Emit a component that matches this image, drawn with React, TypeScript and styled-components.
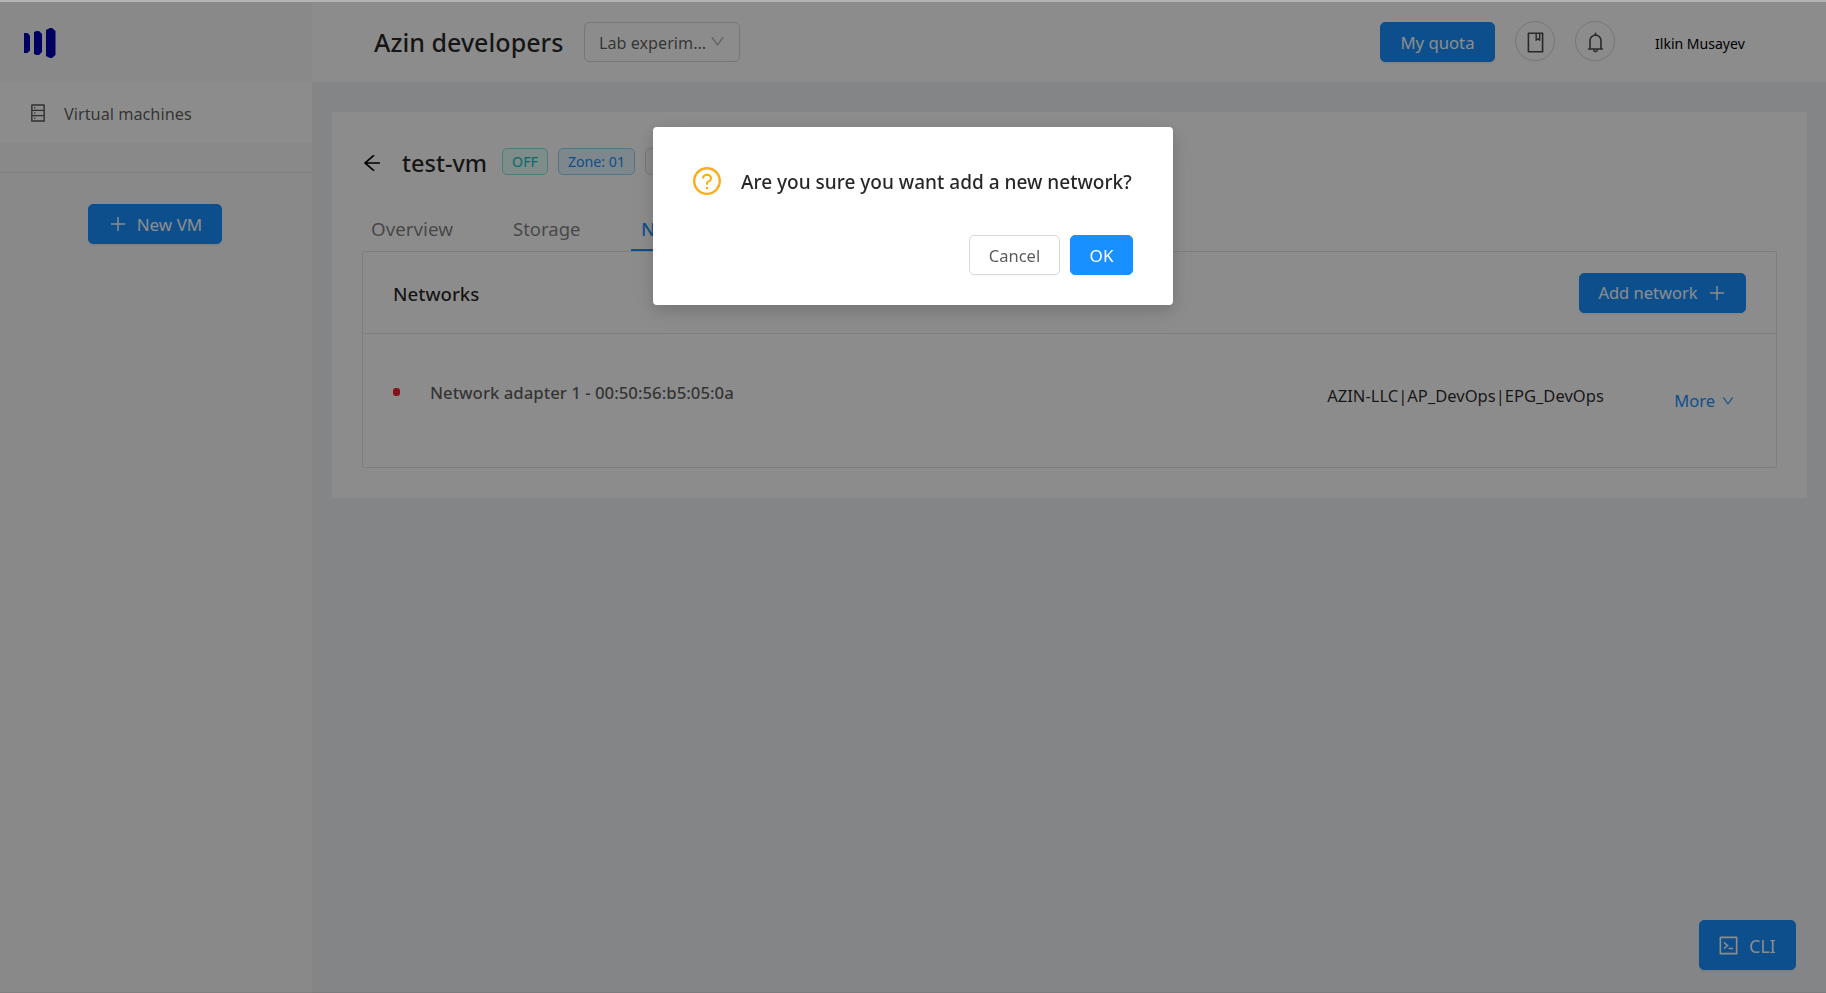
import React from "react";
import styled, { createGlobalStyle } from "styled-components";
import {
  AiOutlineArrowLeft,
  AiOutlineBell,
  AiOutlineBook,
  AiOutlineCode,
  AiOutlineDatabase,
  AiOutlineDown,
  AiOutlinePlus,
  AiOutlineQuestionCircle,
} from "react-icons/ai";

const GlobalStyle = createGlobalStyle`
  *, *::before, *::after { box-sizing: border-box; }
  body {
    margin: 0;
    overflow: hidden;
    font-family: "Noto Sans", "Open Sans", sans-serif;
    font-size: 16.5px;
    color: rgba(0, 0, 0, 0.85);
    background: #f0f2f5;
  }
  svg { display: block; flex: none; }
`;

const Page = styled.div`
  display: flex;
  height: 993px;
  padding-top: 2px;
`;

const Sidebar = styled.aside`
  width: 312px;
  flex: none;
  background: #fafafa;
  display: flex;
  flex-direction: column;
`;

const LogoArea = styled.div`
  height: 80px;
  padding: 26px 24px;
`;

const Menu = styled.nav`
  height: 91px;
  border-bottom: 1px solid #e4e4e4;
`;

const MenuItem = styled.a`
  display: flex;
  align-items: center;
  height: 61px;
  padding-left: 28px;
  gap: 16px;
  background: #fff;
  color: rgba(0, 0, 0, 0.65);
  font-size: 16.3px;
  line-height: 24px;
  span { padding-top: 2px; }
`;

const SidebarAction = styled.div`
  display: flex;
  padding: 31px 0 0 88px;
`;

const Button = styled.button<{ $width: number; $plain?: boolean; $size?: number }>`
  display: flex;
  align-items: center;
  justify-content: center;
  gap: 9px;
  width: ${(p) => p.$width}px;
  height: 40px;
  padding: 1px 0 0;
  font-family: inherit;
  font-size: ${(p) => p.$size ?? 16.7}px;
  line-height: 24px;
  white-space: nowrap;
  border-radius: 5px;
  border: 1px solid ${(p) => (p.$plain ? "#d9d9d9" : "#1890ff")};
  background: ${(p) => (p.$plain ? "#fff" : "#1890ff")};
  color: ${(p) => (p.$plain ? "rgba(0, 0, 0, 0.65)" : "#fff")};
  box-shadow: 0 2px 1px rgba(0, 0, 0, ${(p) => (p.$plain ? 0.015 : 0.045)});
  svg { margin-top: -1px; }
`;

const Main = styled.div`
  flex: 1;
  display: flex;
  flex-direction: column;
`;

const Header = styled.header`
  height: 80px;
  display: flex;
  align-items: center;
  padding: 0 80px 0 62px;
  background: #fff;
`;

const OrgName = styled.h1`
  width: 210px;
  margin: 0;
  font-size: 25.1px;
  font-weight: 500;
  line-height: 34px;
  white-space: nowrap;
`;

const Select = styled.div`
  display: flex;
  align-items: center;
  justify-content: space-between;
  width: 156px;
  height: 40px;
  padding: 1px 13px 0 14px;
  border: 1px solid #d9d9d9;
  border-radius: 5px;
  color: rgba(0, 0, 0, 0.65);
  font-size: 16.2px;
  line-height: 24px;
  svg { color: rgba(0, 0, 0, 0.3); margin-top: -3px; }
`;

const HeaderActions = styled.div`
  margin-left: auto;
  display: flex;
  align-items: center;
  gap: 20px;
`;

const RoundButton = styled.button`
  display: flex;
  align-items: center;
  justify-content: center;
  width: 40px;
  height: 40px;
  margin-top: -2px;
  padding: 3px 0 0;
  border: 1px solid #d9d9d9;
  border-radius: 50%;
  background: #fff;
  color: rgba(0, 0, 0, 0.7);
  box-shadow: 0 2px 1px rgba(0, 0, 0, 0.015);
`;

const UserName = styled.span`
  width: 91px;
  margin-left: 20px;
  padding-top: 3px;
  font-size: 14.05px;
  line-height: 22px;
  white-space: nowrap;
  color: #000;
`;

const Card = styled.main`
  height: 386px;
  margin: 30px 19px 0 20px;
  padding: 29px 30px 30px 29px;
  background: #fff;
`;

const TitleRow = styled.div`
  display: flex;
  align-items: center;
  height: 44px;
  svg { color: #000; }
`;

const VmName = styled.h2`
  width: 100px;
  margin: 0 0 0 19px;
  padding-bottom: 1px;
  font-size: 23.5px;
  font-weight: 500;
  line-height: 34px;
`;

const tones = {
  cyan: ["#13c2c2", "#e6fffb", "#87e8de"],
  blue: ["#1890ff", "#e6f7ff", "#91d5ff"],
  grey: ["rgba(0, 0, 0, 0.65)", "#fafafa", "#d9d9d9"],
};

const Tag = styled.span<{ $tone: keyof typeof tones; $width: number }>`
  width: ${(p) => p.$width}px;
  height: 27px;
  margin: -3px 10px 0 0;
  border: 1px solid ${(p) => tones[p.$tone][2]};
  border-radius: 5px;
  background: ${(p) => tones[p.$tone][1]};
  color: ${(p) => tones[p.$tone][0]};
  font-size: 14.2px;
  line-height: 25px;
  text-align: center;
  white-space: nowrap;
`;

const Tabs = styled.div`
  display: flex;
  height: 66px;
  align-items: flex-end;
  padding-left: 1px;
`;

const Tab = styled.div<{ $active?: boolean; $width: number; $indent: number; $size: number }>`
  width: ${(p) => p.$width}px;
  height: 40px;
  padding-left: ${(p) => p.$indent}px;
  line-height: 36px;
  font-size: ${(p) => p.$size}px;
  font-weight: ${(p) => (p.$active ? 500 : 400)};
  color: ${(p) => (p.$active ? "#1890ff" : "rgba(0, 0, 0, 0.5)")};
  box-shadow: ${(p) => (p.$active ? "inset 0 -2px #1890ff" : "none")};
`;

const Panel = styled.section`
  margin-left: 1px;
  border: 1px solid #e6e6e6;
  border-radius: 2px;
`;

const PanelHeader = styled.div`
  display: flex;
  align-items: center;
  justify-content: space-between;
  height: 82px;
  padding: 0 30px;
  border-bottom: 1px solid #e6e6e6;
`;

const PanelTitle = styled.h3`
  margin: 0;
  padding-top: 2px;
  font-size: 18.7px;
  font-weight: 500;
  line-height: 28px;
`;

const AdapterRow = styled.div`
  display: flex;
  align-items: flex-start;
  height: 133px;
  padding: 46px 41px 0 30px;
  line-height: 24px;
  white-space: nowrap;
`;

const StatusDot = styled.span`
  width: 7px;
  height: 8px;
  margin-top: 8px;
  border-radius: 3px;
  background: #f5222d;
`;

const AdapterName = styled.span`
  margin: 1px 0 0 30px;
  font-size: 16.8px;
  font-weight: 500;
  color: rgba(0, 0, 0, 0.65);
`;

const NetworkPath = styled.span`
  width: 278px;
  margin: 4px 69px 0 auto;
  font-size: 16.55px;
`;

const MoreLink = styled.a`
  display: flex;
  align-items: center;
  gap: 6px;
  margin-top: 9px;
  color: #1890ff;
  font-size: 16.5px;
`;

const CliButton = styled(Button)`
  position: fixed;
  right: 30px;
  bottom: 23px;
  height: 50px;
  padding: 2px 2px 0 0;
`;

const Mask = styled.div`
  position: fixed;
  inset: 2px 0 0;
  background: rgba(0, 0, 0, 0.45);
  border-bottom: 1px solid rgba(0, 0, 0, 0.07);
`;

const TopEdge = styled.div`
  position: fixed;
  inset: 0 0 auto;
  height: 2px;
  background: #b3b3b3;
`;

const Dialog = styled.div`
  position: fixed;
  left: 653px;
  top: 127px;
  width: 520px;
  height: 178px;
  padding: 38px 40px 30px 38px;
  display: flex;
  flex-direction: column;
  justify-content: space-between;
  border-radius: 4px;
  background: #fff;
  box-shadow: 0 5px 15px rgba(0, 0, 0, 0.15), 0 8px 30px 4px rgba(0, 0, 0, 0.05);
`;

const DialogTitle = styled.div`
  display: flex;
  align-items: center;
  height: 32px;
  gap: 18px;
  font-size: 19.05px;
  font-weight: 500;
  line-height: 28px;
  white-space: nowrap;
  svg { color: #faad14; }
  span { padding-top: 2px; }
`;

const DialogActions = styled.div`
  display: flex;
  justify-content: flex-end;
  gap: 10px;
`;

const Logo = () => (
  <svg width="32" height="30" viewBox="0 0 32 30" fill="#0000b4">
    <path d="M0 5h3.500L6 7.500v15L3.500 25H0z" />
    <path d="M10 4l2.500-1h2.500l3 3v18l-3 3h-2.500L10 26z" />
    <path d="M22 2l4-2h2l3.500 3v24L28 30h-2l-4-2z" />
  </svg>
);

export default function App() {
  return (
    <>
      <GlobalStyle />
      <Page>
        <Sidebar>
          <LogoArea><Logo /></LogoArea>
          <Menu>
            <MenuItem><AiOutlineDatabase size={20} /><span>Virtual machines</span></MenuItem>
          </Menu>
          <SidebarAction>
            <Button $width={134} $size={17}><AiOutlinePlus size={20} />New VM</Button>
          </SidebarAction>
        </Sidebar>
        <Main>
          <Header>
            <OrgName>Azin developers</OrgName>
            <Select>Lab experim...<AiOutlineDown size={17} /></Select>
            <HeaderActions>
              <Button $width={115}>My quota</Button>
              <RoundButton><AiOutlineBook size={23} /></RoundButton>
              <RoundButton><AiOutlineBell size={23} /></RoundButton>
              <UserName>Ilkin Musayev</UserName>
            </HeaderActions>
          </Header>
          <Card>
            <TitleRow>
              <AiOutlineArrowLeft size={22} />
              <VmName>test-vm</VmName>
              <Tag $tone="cyan" $width={46}>OFF</Tag>
              <Tag $tone="blue" $width={77}>Zone: 01</Tag>
              <Tag $tone="grey" $width={60} />
            </TitleRow>
            <Tabs>
              <Tab $width={141} $indent={9} $size={18.8}>Overview</Tab>
              <Tab $width={128} $indent={10} $size={18.5}>Storage</Tab>
              <Tab $width={105} $indent={10} $size={18.7} $active>Networks</Tab>
            </Tabs>
            <Panel>
              <PanelHeader>
                <PanelTitle>Networks</PanelTitle>
                <Button $width={167} $size={16.5}>Add network<AiOutlinePlus size={20} /></Button>
              </PanelHeader>
              <AdapterRow>
                <StatusDot />
                <AdapterName>Network adapter 1 - 00:50:56:b5:05:0a</AdapterName>
                <NetworkPath>AZIN-LLC|AP_DevOps|EPG_DevOps</NetworkPath>
                <MoreLink>More<AiOutlineDown size={14} /></MoreLink>
              </AdapterRow>
            </Panel>
          </Card>
        </Main>
      </Page>
      <CliButton $width={97} $size={17.6}><AiOutlineCode size={23} />CLI</CliButton>
      <Mask />
      <TopEdge />
      <Dialog>
        <DialogTitle><AiOutlineQuestionCircle size={32} /><span>Are you sure you want add a new network?</span></DialogTitle>
        <DialogActions>
          <Button $width={91} $size={16.5} $plain>Cancel</Button>
          <Button $width={63} $size={17.1}>OK</Button>
        </DialogActions>
      </Dialog>
    </>
  );
}
